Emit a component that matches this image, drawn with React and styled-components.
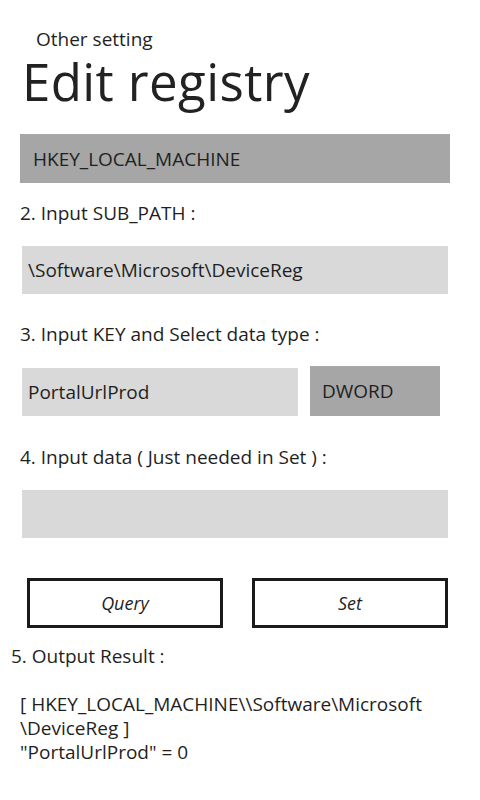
import React from 'react';
import styled, { createGlobalStyle } from 'styled-components';

const Global = createGlobalStyle`
  body {
    margin: 0;
    background: #ffffff;
    font-family: "Open Sans", "Noto Sans", sans-serif;
    color: #1f1f1f;
  }
`;

const Page = styled.div`
  width: 480px;
  height: 800px;
  overflow: hidden;
  display: flex;
  flex-direction: column;
`;

const Header = styled.div`
  padding: 28px 0 0 36px;
  font-size: 19px;
  line-height: 22px;
`;

const Title = styled.h1`
  margin: 3px 0 0;
  padding-left: 22px;
  font-weight: 400;
  font-size: 51px;
  line-height: 56px;
  letter-spacing: 0.4px;
  color: #222;
`;

const Combo = styled.div`
  margin: 25px 30px 0 20px;
  height: 49px;
  background: #a6a6a6;
  display: flex;
  align-items: center;
  padding-left: 13px;
  font-size: 19px;
  box-sizing: border-box;
`;

const Label = styled.div`
  margin: ${p => p.$top}px 0 0 ${p => p.$left || 20}px;
  font-size: 19px;
  line-height: 24px;
`;

const Field = styled.div`
  height: 48px;
  background: #d9d9d9;
  display: flex;
  align-items: center;
  padding-left: 6px;
  font-size: 19px;
  box-sizing: border-box;
  width: ${p => p.$width}px;
`;

const FieldRow = styled.div`
  display: flex;
  align-items: flex-end;
  gap: 12px;
  margin: ${p => p.$top}px 0 0 22px;
`;

const TypeBox = styled.div`
  width: 130px;
  height: 50px;
  background: #a6a6a6;
  display: flex;
  align-items: center;
  padding-left: 12px;
  font-size: 19px;
  box-sizing: border-box;
`;

const Buttons = styled.div`
  display: flex;
  gap: 29px;
  margin: 40px 0 0 27px;
`;

const Button = styled.button`
  width: 196px;
  height: 50px;
  box-sizing: border-box;
  border: 3px solid #1a1a1a;
  background: #fff;
  font-family: inherit;
  font-style: italic;
  font-size: 18px;
  color: #1f1f1f;
  padding: 0;
`;

const Output = styled.div`
  margin: 24px 0 0 20px;
  width: 440px;
  font-size: 19px;
  line-height: 24px;
`;

export default function App() {
  return (
    <Page>
      <Global />
      <Header>Other setting</Header>
      <Title>Edit registry</Title>
      <Combo>HKEY_LOCAL_MACHINE</Combo>
      <Label $top={18}>2. Input SUB_PATH :</Label>
      <FieldRow $top={21}>
        <Field $width={426}>\Software\Microsoft\DeviceReg</Field>
      </FieldRow>
      <Label $top={28}>3. Input KEY and Select data type :</Label>
      <FieldRow $top={20}>
        <Field $width={276}>PortalUrlProd</Field>
        <TypeBox>DWORD</TypeBox>
      </FieldRow>
      <Label $top={29}>4. Input data ( Just needed in Set ) :</Label>
      <FieldRow $top={21}>
        <Field $width={426} />
      </FieldRow>
      <Buttons>
        <Button>Query</Button>
        <Button>Set</Button>
      </Buttons>
      <Label $top={16} $left={11}>5. Output Result :</Label>
      <Output>
        [ HKEY_LOCAL_MACHINE\\Software\Microsoft
        <br />
        \DeviceReg ]
        <br />
        "PortalUrlProd" = 0
      </Output>
    </Page>
  );
}
